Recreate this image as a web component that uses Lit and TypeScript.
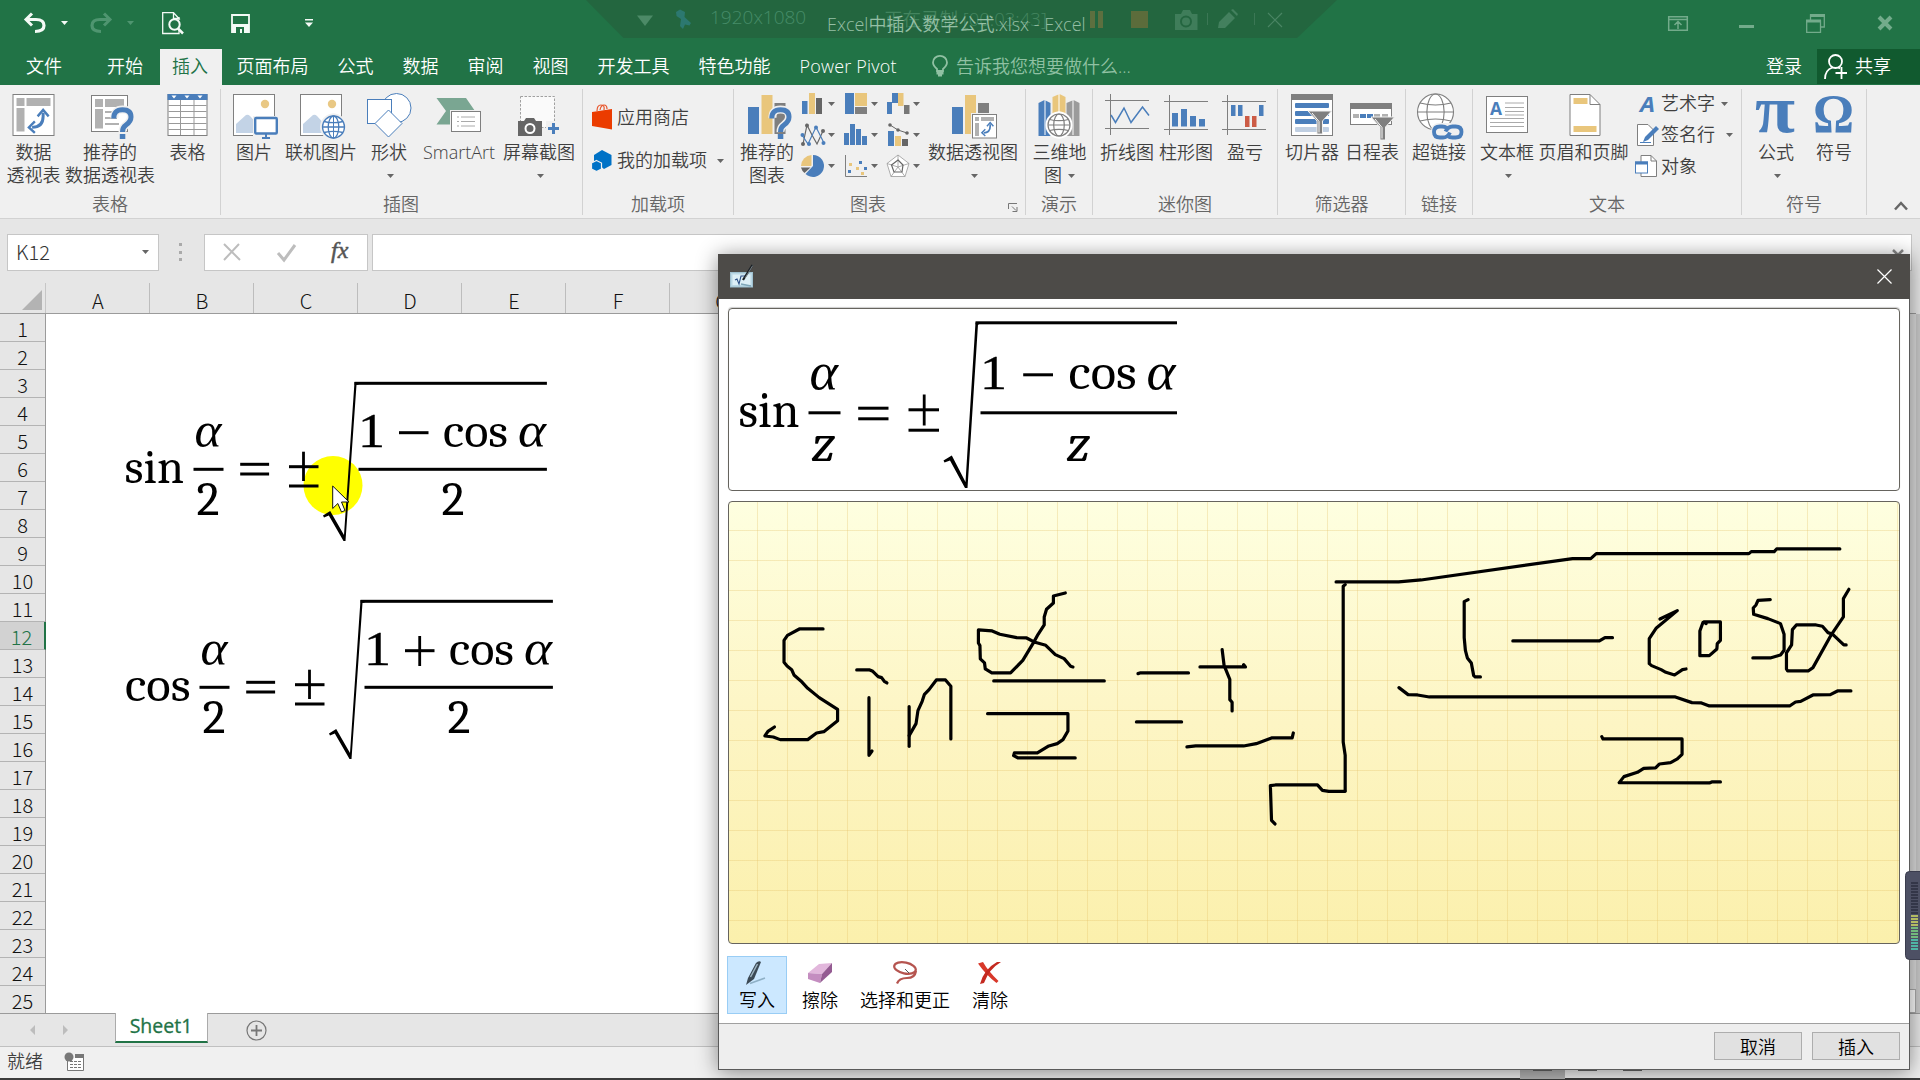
import { LitElement, html, svg, css } from "lit";
import { customElement } from "lit/decorators.js";

const B = "#4a7ebb", Y = "#e9c67c", G = "#7f7f7f", L = "#b1b1b1";
const ICON_TOP = 92;

// ---------- shared icon pieces (ribbon coordinates) ----------
const question = (x: number) => svg`
  <g transform="translate(${x} 0)">
    <path d="M3.5 118Q3 109.5 11.5 109.5Q20 109.5 20 117Q20 121.5 15 125Q11.300 127.600 11.500 132" fill="none" stroke="#f0f0f0" stroke-width="8"/>
    <path d="M2.800 118.500Q2.500 109.700 11.500 109.700Q20 109.700 20 117Q20 121.500 15 125Q11.300 127.600 11.500 132" fill="none" stroke=${B} stroke-width="5"/>
    <rect x="8.800" y="134" width="5.500" height="5" fill=${B}/>
  </g>`;
const globe = (x: number, y: number, r: number, c: string, w = 1.3) => svg`
  <g fill="none" stroke=${c} stroke-width=${w}>
    <circle cx=${x} cy=${y} r=${r} fill="#fff"/>
    <ellipse cx=${x} cy=${y} rx=${r * 0.48} ry=${r}/>
    <path d="M${x - r} ${y}H${x + r}M${x - r * 0.86} ${y - r * 0.5}Q${x} ${y - r * 0.28} ${x + r * 0.86} ${y - r * 0.5}M${x - r * 0.86} ${y + r * 0.5}Q${x} ${y + r * 0.28} ${x + r * 0.86} ${y + r * 0.5}"/>
  </g>`;
const photo = (x: number) => svg`
  <rect x=${x + 0.5} y="94.500" width="41" height="41" fill="#fff" stroke="#808080"/>
  <circle cx=${x + 32} cy="104" r="4.200" fill="#e9c884"/>
  <path d="M${x + 3} 133V124L${x + 13} 115Q${x + 15} 114 ${x + 17} 116L${x + 27} 127V133Z" fill="#c3d3e6"/>`;
const swap = (x: number, y: number, k: number) => svg`
  <g transform="translate(${x} ${y}) scale(${k})" fill="none" stroke=${B}>
    <path d="M17 4V8Q17 20 5 20" stroke-width="3.200"/>
    <path d="M11 8L17 1L23 8" stroke-width="2.600"/><path d="M8 13.500L1.500 20L8 26" stroke-width="2.600"/>
  </g>`;
const funnel = (x: number, y: number) => svg`
  <path d="M${x} ${y}h23.500l-9 10v13h-5.500v-13z" fill=${G} stroke="#f0f0f0" stroke-width="1"/>
  <path d="M${x + 4} ${y + 2}l7 8.500v11" fill="none" stroke="#fff" stroke-width="1"/>`;

const icons: Record<string, unknown> = {
  pivot: svg`<rect x="12.500" y="94.500" width="41" height="41" fill="#fff" stroke=${G}/>
    <path d="M16 98h8v8h-8zM26 98h24v8h-24zM16 108h8v23.500h-8z" fill=${L}/>${swap(27, 109, 0.92)}`,
  recPivot: svg`<rect x="91.500" y="95.500" width="36" height="36" fill="#fff" stroke=${G}/>
    <path d="M95 99h8v8h-8zM105 99h19v8h-19zM95 109h8v19.500h-8z" fill=${L}/>
    <path d="M105 112h8M105 118h12M105 124h14" stroke=${L} stroke-width="2"/>${question(111)}`,
  table: svg`<rect x="167.500" y="94.500" width="39" height="41" fill="#fff" stroke=${G}/>
    <path d="M180 100v35M193.500 100v35M168 105.500h38M168 111.500h38M168 117.500h38M168 123.500h38M168 129.500h38" stroke="#999"/>
    <rect x="167" y="94" width="40" height="6" fill=${B}/>
    <path d="M171 95.500h5l-2.500 3zM184 95.500h5l-2.500 3zM197 95.500h5l-2.500 3z" fill="#fff"/>`,
  picture: svg`${photo(233)}<rect x="253" y="116" width="26" height="20" fill="#f0f0f0"/><rect x="255.200" y="118" width="21.600" height="15.500" fill="#fff" stroke=${B} stroke-width="2.400" rx="1"/>
    <path d="M266 134v4M262 138h8" stroke=${B} stroke-width="2"/>`,
  online: svg`${photo(300)}${globe(333.5, 127, 12.5, "#f0f0f0", 2)}${globe(333.5, 127, 11, B)}<path d="M333.500 116v22" stroke=${B}/>`,
  shapes: svg`<g fill="#fff" stroke=${B}><circle cx="396.500" cy="108" r="14.500"/><rect x="367.500" y="99.500" width="24" height="24"/>
    <path d="M388.500 110L402 123.500L388.500 137L375 123.500Z"/></g>`,
  smart: svg`<path d="M436.500 98H466L475 111L466 124.500H436.500L446 111Z" fill="#7aa692"/>
    <rect x="450" y="110" width="33" height="24" fill="#f0f0f0"/><rect x="451.500" y="111.500" width="29" height="20" fill="#fff" stroke=${G}/>
    <path d="M457 117h2M461 117h14M457 121.500h2M461 121.500h14M457 126h2M461 126h14" stroke="#aaa"/>`,
  shot: svg`<rect x="520.500" y="96.500" width="34" height="31" fill="#fafafa" stroke="#a0a0a0" stroke-dasharray="2.500 1.500"/>
    <path d="M518 121h6l2-3h8l2 3h6v15h-24z" fill="#666"/><circle cx="530" cy="128.500" r="4.500" fill="none" stroke="#fff" stroke-width="2"/>
    <rect x="546" y="121" width="14" height="15" fill="#f0f0f0"/><path d="M548 128.500h11M553.500 123v11" stroke=${B} stroke-width="3"/>`,
  recChart: svg`<path d="M747.500 107h11v27h-11z" fill=${B}/><path d="M761 95h11v39h-11z" fill=${Y}/><path d="M774 103h11v31h-11z" fill=${G}/>${question(768.5)}`,
  pivotChart: svg`<path d="M952 107h11v27h-11z" fill=${B}/><path d="M965 95h11v39h-11z" fill=${Y}/><path d="M978 103h11v10h-11z" fill=${G}/>
    <rect x="971" y="113" width="27" height="27" fill="#f0f0f0"/><rect x="972.500" y="114.500" width="24" height="23.500" fill="#fff" stroke=${G}/>
    <path d="M975 117h4v4h-4zM981 117h13v4h-13zM975 123h4v13h-4z" fill=${L}/>${swap(981, 122, 0.54)}`,
  map3d: svg`<path d="M1038 103l6-3 6 3v33h-12z" fill=${B}/><path d="M1052 97l7-3 6 3v30h-13z" fill=${Y}/><path d="M1066 103l7-3 6 3v33h-13z" fill="#9b9b9b"/>
    <path d="M1044.500 100v35M1058.500 94v20M1072.500 100v35" stroke="#fff"/>${globe(1058.5, 125, 12.500, "#fff", 2)}${globe(1058.5, 125, 11, G, 1.2)}`,
  spark1: svg`<path d="M1110.500 94v41M1105 100.500h44M1105 128.500h44" stroke=${G} fill="none"/><path d="M1111 115l4.500 7.500 8.500-14.500 7 14.500 11.500-15.500 6.500 8.500" fill="none" stroke=${B} stroke-width="1.500"/>`,
  spark2: svg`<path d="M1169.500 95v40M1164 101.500h44M1164 129.500h44" stroke=${G}/><path d="M1172 113h6v13.500h-6zM1181 109h6v17.500h-6zM1190 116h6v10.500h-6zM1199 119h6v7.500h-6z" fill=${B}/>`,
  spark3: svg`<path d="M1227.500 95v40M1222 101.500h44M1222 129.500h44" stroke=${G}/><path d="M1231 105h4.500v11h-4.500zM1238 105h4.500v11h-4.500zM1259 105h4.500v11h-4.500z" fill=${B}/><path d="M1245 116h4.500v11h-4.500zM1252 116h4.500v11h-4.500z" fill="#cc5b45"/>`,
  slicer: svg`<rect x="1291.500" y="94.500" width="41" height="41" fill="#fff" stroke=${G}/><rect x="1291" y="94" width="42" height="6" fill=${G}/>
    <g fill=${B}><rect x="1295" y="103" width="34" height="5" rx="1"/><rect x="1295" y="111" width="34" height="5" rx="1"/><rect x="1295" y="119" width="34" height="5" rx="1"/></g><rect x="1295" y="127" width="34" height="5" rx="1" fill="#c0cfe2"/>${funnel(1308, 111)}`,
  timeline: svg`<rect x="1350.500" y="103.500" width="41" height="21" fill="#fff" stroke=${G}/><rect x="1350" y="103" width="42" height="6" fill=${G}/>
    <path d="M1353 114h6v4h-6zM1374 114h6v4h-6zM1382 114h6v4h-6z" fill=${L}/><path d="M1360 114h6v4h-6zM1367 114h6v4h-6z" fill=${B}/>${funnel(1371, 117)}`,
  link: svg`${globe(1435.5, 112, 18, G, 1.1)}<rect x="1431" y="123" width="33" height="17" rx="8" fill="#f0f0f0"/>
    <g fill="none" stroke=${B} stroke-width="3.800"><path d="M1447 128q-2-1.500-5-1.500h-2q-6 0-6 5.500t6 5.500h3q4.500 0 7-5"/><path d="M1447.500 136q2 1.500 5 1.500h3q6 0 6-5.500t-6-5.500h-3q-4.500 0-7 5"/></g>`,
  textbox: svg`<rect x="1486.500" y="96.500" width="41" height="36" fill="#fff" stroke=${G}/><path d="M1505 103h19M1505 107.500h19M1505 111.500h19M1490 118.500h34M1490 122.500h34M1490 126.500h34M1505 115h19" stroke="#aaa"/>
    <text x="1490" y="115" font-size="17" font-weight="700" font-family="Open Sans, Liberation Sans, sans-serif" fill=${B} textLength="12" lengthAdjust="spacingAndGlyphs">A</text>`,
  headfoot: svg`<path d="M1569.500 94.500h20l10 10v31h-30z" fill="#fff" stroke=${G}/><path d="M1589.500 94.500v10h10" fill="none" stroke=${G}/><path d="M1573 98h14v6h-14zM1573 126h23v6h-23z" fill=${Y}/>`,
  pi: svg`<text x="1755.500" y="132" font-size="68" font-weight="700" font-family="Liberation Serif, Times New Roman, serif" fill=${B} textLength="40" lengthAdjust="spacingAndGlyphs">π</text>`,
  omega: svg`<text x="1813.500" y="132" font-size="55" font-weight="700" font-family="Liberation Serif, Times New Roman, serif" fill=${B} textLength="41" lengthAdjust="spacingAndGlyphs">Ω</text>`,
};

// ---------- small chart gallery icons (24 x 24) ----------
const charts = [
  svg`<path d="M1 9h5.500v13H1z" fill=${B}/><path d="M8 1h6v21H8z" fill=${Y}/><path d="M15 6h6v16h-6z" fill="#666"/>`,
  svg`<path d="M1 1h9v21H1z" fill=${B}/><path d="M11 1h12v13H11z" fill=${Y}/><path d="M11 15h12v7H11z" fill=${G}/>`,
  svg`<path d="M1 10h5v12H1zM6 1h6v10H6z" fill=${B}/><path d="M12 1h5.500v13H12z" fill=${Y}/><path d="M18 13h5.500v9H18z" fill="#777"/>`,
  svg`<path d="M2 21L6 2L11 12L16 21L22 8" fill="none" stroke="#666" stroke-width="1.200"/><path d="M1 12L7 21L15 4L23 20" fill="none" stroke=${B} stroke-width="1.200"/><g fill="#666"><circle cx="6" cy="2.500" r="2"/><circle cx="22" cy="8" r="2"/><circle cx="2" cy="21" r="2"/></g><g fill=${B}><circle cx="1.500" cy="12" r="2"/><circle cx="8" cy="21" r="2"/><circle cx="15" cy="4.500" r="2"/><circle cx="22.500" cy="20" r="2"/></g>`,
  svg`<path d="M0 10h5v12H0zM6 1h5v21H6zM12 6h5v16h-5zM18 13h5v9h-5z" fill=${B}/>`,
  svg`<path d="M2 8h6v15H2z" fill=${B}/><path d="M9 13h6v10H9z" fill=${Y}/><path d="M16 16h6v7h-6z" fill="#666"/><path d="M4 2L12 7L21 10" fill="none" stroke="#666"/><g fill="#666"><circle cx="4" cy="2" r="1.800"/><circle cx="12" cy="7" r="1.800"/><circle cx="21" cy="10" r="1.800"/></g>`,
  svg`<path d="M12 12V1A11 11 0 1 1 4.500 20Z" fill=${B}/><path d="M10.500 11.500V1A11 11 0 0 0 0 12H10Z" fill=${Y}/><path d="M9.500 13.500H0A11 11 0 0 0 3.500 19Z" fill="#666"/>`,
  svg`<path d="M1.500 1V22.500H23" fill="none" stroke=${G}/><path d="M5 9h3v3H5zM12 13h3v3h-3zM17 18h3v3h-3z" fill=${Y}/><path d="M15 7h3v3h-3zM4 16h3v3H4zM20 13h3v3h-3z" fill=${B}/>`,
  svg`<g fill="none" stroke="#999" stroke-width=".8"><path d="M12 1L23 9.500L19 22.500H5L1 9.500Z" fill="#fff"/><path d="M12 1V13L23 9.500M12 13L19 22.500M12 13L5 22.500M12 13L1 9.500"/><path d="M12 6L17 11L16 18L8 18L5.500 11Z" stroke="#666" stroke-width="1.200"/></g>`,
];

// ---------- formula drawing ----------
const word = (t: string, x: number, w: number, y: number, it = false, size = 49) => svg`
  <text x=${x} y=${y} font-size=${size} font-style=${it ? "italic" : "normal"} textLength=${w} lengthAdjust="spacingAndGlyphs">${t}</text>`;
const one = (x: number, y: number) => svg`<text class="one" x=${x} y=${y} font-size="49" textLength="27" lengthAdjust="spacingAndGlyphs">1</text>`;
const rule = (x1: number, x2: number, y: number, h = 3) => svg`<rect x=${x1} y=${y - h / 2} width=${x2 - x1} height=${h}/>`;
const post = (x: number, y1: number, y2: number) => svg`<rect x=${x - 1.4} y=${y1} width="2.800" height=${y2 - y1}/>`;

const sheetBody = (plus: boolean) => svg`
  ${word("α", 194, 27, 446.7, true, 51)}${rule(193, 223, 469.3)}${word("2", 196, 23, 515)}
  ${rule(239.7, 268.6, 464.3)}${rule(239.7, 268.6, 474)}
  ${rule(288.5, 318, 466.7)}${post(303, 451.7, 481)}${rule(288.5, 318, 486)}
  <path d="M322.500 515.500L329.700 511L343.500 535L354 382H358V384.800H356L345 541H343L328.300 515.500L323.500 517.500Z"/>
  ${rule(354, 546.4, 383.3)}
  ${one(357.5, 446.7)}${rule(398.5, 428, 432.7)}${plus ? post(413.2, 418, 448) : ""}
  ${word("cos", 442.5, 65, 446.7)}${word("α", 517.5, 28, 446.7, true, 51)}
  ${rule(358, 546.4, 469.3)}${word("2", 441, 23, 515)}`;

const strokesA = [
  "268,386 206,386 175,405 166,420 166,486 174,497 186,508 192,524 210,542 228,564 258,592 306,627 306,661 270,694 251,698 228,718 156,718 138,710 116,707 124,693 141,680",
  "356,509 390,509 398,513 412,529 421,532 428,543 435,548", "388,592 388,765 396,752",
  "493,619 493,738", "493,706 511,670 516,631 527,603 533,582 545,568 564,539 588,539 602,558 602,716",
  "901,278 870,287 870,308 852,327 846,350 846,374 830,402 818,427 790,480 758,518 709,518 692,506 690,488 679,476 678,436 674,428 674,389 710,392 730,402 774,412 800,413 822,426 850,435 875,463 898,475 915,498 921,500",
  "714,542 1003,542", "698,640 908,640 908,692 895,718 880,730 858,737 828,758 768,758 766,766 778,773 927,773",
  "1091,520 1096,518 1223,518", "1087,665 1205,665", "1253,500 1372,500 1367,493",
  "1311,448 1316,495 1331,537 1331,598 1337,606 1337,632", "1219,740 1242,737 1367,737 1400,730 1440,713 1494,713 1497,698",
  "1449,971 1440,960 1437,856 1450,854 1560,854 1573,870 1590,873 1632,873",
];
const strokesB = [
  "113,872 113,765 108,725 108,258 113,253", "90,245 248,245 305,239 688,175 734,175 748,160 1134,160 1140,154 1198,154 1204,146 1364,146",
  "424,298 414,304 414,412 417,450 422,473 432,488 438,526 442,530 455,530", "537,422 756,422 770,412 789,412",
  "909,356 953,331 900,383 882,415 882,490 888,496 912,508 924,516 946,524 966,508 975,506",
  "1026,370 1020,365 1062,365 1062,420 1054,430 1053,446 1034,466 1010,466 1010,392 1018,366",
  "1188,298 1157,300 1152,314 1145,323 1146,342 1182,355 1214,370 1223,402 1223,450 1214,464 1188,473 1144,473",
  "1387,267 1373,295 1373,350 1343,402 1296,502 1284,512 1232,512 1229,506 1229,458 1242,434 1244,388 1254,374 1304,374 1320,378 1334,397 1346,402 1374,434 1380,434",
  "249,562 272,583 296,584 326,590 948,590 990,607 1014,608 1034,617 1237,617 1252,605 1265,603 1296,584 1340,583 1358,572 1392,572",
  "762,709 765,716 965,716 965,762 953,776 936,787 908,791 898,803 868,804 852,816 818,829 806,847 1034,848 1040,845 1062,845",
];

const COLS = ["A", "B", "C", "D", "E", "F", "G"];
const TABS = ["文件", "开始", "插入", "页面布局", "公式", "数据", "审阅", "视图", "开发工具", "特色功能", "Power Pivot"];

@customElement("app-root")
export class AppRoot extends LitElement {
  static styles = css`
    :host { display: block; width: 1920px; height: 1080px; overflow: hidden; position: relative;
      font: 350 18px/23px "Open Sans", "Noto Sans CJK SC", sans-serif; color: #3f3f3f; background: #e6e6e6; }
    * { box-sizing: border-box; }
    svg { display: block; flex: none; overflow: visible; }
    .app { display: flex; flex-direction: column; height: 1080px; }
    .cell { display: flex; align-items: center; justify-content: center; flex: none; }
    .title { height: 49px; background: #217346; display: flex; justify-content: space-between; }
    .qat, .sys { display: flex; height: 46px; }
    .doc { position: absolute; left: 827px; top: 13px; width: 268px; color: #95bfa5; white-space: nowrap; }
    .rec { position: absolute; left: 586px; top: 0; }
    .rectext { position: absolute; top: 7px; color: #468c68; white-space: nowrap; font-size: 19px; }
    .res { left: 710px; top: 6px; }
    .timer { left: 884px; font-size: 18.500px; color: #43855f; }
    .tabs { height: 36px; background: #217346; display: flex; color: #fff; align-items: stretch; }
    .tab { padding: 0 14.500px; line-height: 34px; white-space: nowrap; }
    .tab.file { padding-left: 26px; padding-right: 30.500px; }
    .tab.on { background: #f0f0f0; color: #217346; margin: 0 0 0 2px; padding: 0 14px 0 12.500px; }
    .tab.last { letter-spacing: .2px; width: 130px; }
    .tell { display: flex; align-items: center; color: #90c1a3; padding: 0 0 2px 17px; gap: 8px; flex: 1; line-height: 34px; }
    .login { line-height: 34px; padding-right: 15px; }
    .share { width: 103px; height: 35px; background: #115a2f; display: flex; align-items: center; gap: 8px; padding-left: 7px; line-height: 33px; }
    .ribbon { height: 134px; background: #f0f0f0; border-bottom: 1px solid #d2d2d2; display: flex; flex: none; padding-top: 4px; }
    .group { height: 126px; border-right: 1px solid #d2d2d2; display: flex; flex-direction: column; flex: none; position: relative; }
    .body { display: flex; height: 103px; padding-top: 3px; }
    .cap { color: #666; text-align: center; line-height: 23px; height: 22px; margin-top: 2px; flex: none; }
    .btn { display: flex; flex-direction: column; align-items: center; flex: none; white-space: nowrap; text-align: center; }
    .btn .lbl { margin-top: 3px; height: 23px; }
    .btn .lbl2 { height: 23px; display: flex; align-items: center; justify-content: center; gap: 6px; }
    .btn .lbl2 .drop { margin: 1px 0 0 3px; }
    .smalls { display: flex; flex-direction: column; }
    .srow { display: flex; align-items: center; gap: 5px; white-space: nowrap; }
    .tight .srow { gap: 2px; }
    .tight .srow .ar { margin-left: 4px; }
    .gal { display: grid; grid-template-columns: 42.500px 42.500px 42px; grid-template-rows: 31px 31px 31px; width: 127px; }
    .gal .srow { gap: 3px; align-items: flex-start; }
    .gal .srow .ar { margin-top: 10px; }
    .launch { position: absolute; right: 7px; bottom: 3px; }
    .collapse { flex: 1; display: flex; align-items: flex-end; padding: 0 0 7px 27px; }
    .fbar { height: 64px; display: flex; flex: none; padding: 15px 0 0 7px; align-items: flex-start; }
    .box { background: #fff; border: 1px solid #c6c6c6; height: 37px; display: flex; align-items: center; flex: none; }
    .name { width: 152px; padding: 0 9px 2px 8px; justify-content: space-between; font: 300 20px/34px "Noto Sans CJK SC", sans-serif; color: #333; }
    .fx { width: 164px; margin-left: 17px; }
    .input { width: 1540px; margin-left: 4px; justify-content: flex-end; padding-right: 7px; }
    .heads { height: 31px; display: flex; flex: none; border-bottom: 1px solid #9b9b9b; margin-right: 4px; font: 300 20px/35px "Noto Sans CJK SC", sans-serif; color: #111; }
    .corner { width: 46px; border-right: 1px solid #c6c6c6; display: flex; align-items: flex-end; justify-content: flex-end; padding: 0 3px 3px 0; flex: none; }
    .col { width: 104px; padding-left: 1px; text-align: center; border-right: 1px solid #bdbdbd; flex: none; height: 30px; }
    .grid { display: flex; height: 699px; flex: none; background: #fff; }
    .nums { width: 46px; background: #e6e6e6; border-right: 1px solid #9b9b9b; flex: none; font: 300 20px/29px "Noto Sans CJK SC", sans-serif; color: #111; text-align: center; }
    .num { height: 28px; border-bottom: 1px solid #b4b4b4; }
    .num.on { background: #d2d2d2; color: #217346; border-right: 2px solid #217346; margin-right: -1px; padding-right: 1px; }
    .canvas { flex: 1; position: relative; overflow: hidden; }
    .vbar { width: 20px; background: #dcdcdc; border-right: 4px solid #c8c8c8; border-left: 1px solid #bbb; display: flex; flex-direction: column; justify-content: flex-end; }
    .vbtn { height: 24px; background: #fdfdfd; border: 1px solid #aaa; }
    .maths { font-family: "Cambria Math", Cambria, Caladea, "Liberation Serif", serif; font-weight: 400; fill: #000; }
    .one { font-family: "Liberation Serif", serif; stroke: #000; stroke-width: .4px; }
    .sheets { height: 34px; flex: none; border-top: 1px solid #9b9b9b; border-bottom: 1px solid #c0c0c0; display: flex; align-items: flex-start; }
    .sheet { width: 93px; height: 30px; margin: -1px 0 0 115px; background: #fff; border: 1px solid #ababab; border-width: 0 1px; border-bottom: 2px solid #217346; color: #217346; text-align: center; font-size: 19.500px; line-height: 26px; font-weight: 400; -webkit-text-stroke: .3px #217346; padding-right: 1px; }
    .arrows { width: 115px; margin-right: -115px; height: 32px; }
    .plus { margin: 6px 0 0 38px; }
    .status { flex: 1; background: #f0f0f0; border-bottom: 2px solid #3c3c3c; display: flex; align-items: center; padding: 0 0 2px 7px; gap: 21px; }
    .views { margin-left: auto; margin-right: 265px; display: flex; height: 31px; margin-bottom: -4px; }
    .view { width: 45px; display: flex; align-items: center; justify-content: center; }
    .view.on { background: #b4b4b4; }
    .dialog { position: absolute; left: 718px; top: 254px; width: 1192px; height: 816px; background: #fff; border: 1px solid #5a5a5a; box-shadow: 0 2px 20px rgba(0,0,0,.45); display: flex; flex-direction: column; color: #000; }
    .dtitle { height: 45px; margin: -1px -1px 0; background: #4d4b48; display: flex; justify-content: space-between; padding: 0 18px 0 12px; align-items: center; flex: none; }
    .pane { margin: 9px 9px 0 9px; border: 1px solid #66645e; border-radius: 4px; flex: none; overflow: hidden; }
    .preview { height: 183px; box-shadow: 0 -1px 1px #ccc; }
    .ink { height: 443px; margin-top: 10px; background:
        repeating-linear-gradient(90deg, transparent 0 28px, rgba(226,190,100,.3) 28px 29.300px, transparent 29.300px 30px),
        repeating-linear-gradient(180deg, transparent 0 28px, rgba(226,190,100,.3) 28px 29.300px, transparent 29.300px 30px),
        linear-gradient(#feffe0, #fdf5c4 50%, #fbf0ac); }
    .tools { display: flex; height: 79px; padding: 12px 0 0 8px; flex: none; align-items: flex-start; }
    .tool { height: 58px; padding: 4px 11px 0; border: 1px solid transparent; display: flex; flex-direction: column; align-items: center; gap: 4px; white-space: nowrap; flex: none; }
    .tool.on { background: #cce8ff; border-color: #99cdf5; width: 60px; }
    .foot { flex: 1; background: #eee; border-top: 1px solid #a0a0a0; display: flex; justify-content: flex-end; gap: 10px; padding: 8px 9px 0 0; }
    .pb { width: 88px; height: 28px; background: #e1e1e1; border: 1px solid #adadad; text-align: center; line-height: 28px; }
    .meter { position: absolute; left: 1905px; top: 871px; }
    .pointer { position: absolute; left: 332px; top: 485px; }
  `;

  arrow(c = "#666", cls = "ar") {
    return html`<svg class=${cls} width="7" height="4" viewBox="0 0 7 4"><path d="M0 0h7L3.500 4z" fill=${c}/></svg>`;
  }
  btn(icon: string, centre: number, width: number, l1: string, l2: unknown = "") {
    return html`<div class="btn" style="width:${width}px">
      <svg width="60" height="46" viewBox="${centre - 30} ${ICON_TOP} 60 46">${icons[icon]}</svg>
      <span class="lbl">${l1}</span><span class="lbl2">${l2}</span></div>`;
  }
  group(width: number, cap: string, capShift: number, pad: number, body: unknown, extra: unknown = "") {
    return html`<div class="group" style="width:${width}px">
      <div class="body" style="padding-left:${pad}px">${body}</div>
      <div class="cap" style="padding-right:${capShift}px">${cap}</div>${extra}</div>`;
  }
  cell(w: number, body: unknown) { return html`<div class="cell" style="width:${w}px">${body}</div>`; }

  titleBar() {
    const w = "#f4faf6", d = "#4f9570", s = "#73ab8b";
    return html`<div class="title">
      <div class="qat">
        ${this.cell(69, html`<svg width="22" height="20" viewBox="0 0 22 20"><path d="M8 1L2 7L8 13" transform="translate(0 -.5)" fill="none" stroke=${w} stroke-width="3"/><path d="M2 6.500H12Q20 6.500 20 12.500T11 18.500" fill="none" stroke=${w} stroke-width="3.200"/></svg>`)}
        <div class="cell" style="width:14px;margin-left:-12px">${this.arrow(w)}</div>
        ${this.cell(59, html`<svg width="22" height="20" viewBox="0 0 22 20"><path d="M14 .5L20 6.500L14 12.500" fill="none" stroke=${d} stroke-width="3"/><path d="M20 6.500H10Q2 6.500 2 12.500T11 18.500" fill="none" stroke=${d} stroke-width="3.200"/></svg>`)}
        <div class="cell" style="width:14px;margin-left:-7px">${this.arrow(d)}</div>
        <div class="cell" style="width:72px"><svg width="22" height="22" viewBox="0 0 22 22"><path d="M17 5V8M17 18V21.500H.7V.7H11.500L17 6.500H11.500V.7" fill="none" stroke=${w} stroke-width="1.300"/><circle cx="12.500" cy="12.500" r="5.200" fill="#217346" stroke=${w} stroke-width="2"/><path d="M16 16.500L21 21.500" stroke=${w} stroke-width="2.500"/></svg></div>
        <div class="cell" style="width:62px"><svg width="19" height="19" viewBox="0 0 19 19"><path d="M1 1H18V18H1Z" fill="none" stroke=${w} stroke-width="1.800"/><path d="M1 10H18V18.500H1Z" fill=${w}/><path d="M5 13h8v6h-2v-4h-2v4H5z" fill="#217346"/></svg></div>
        <div class="cell" style="width:76px"><svg width="8" height="8" viewBox="0 0 8 8"><path d="M0 0H8V1.500H0ZM0 3.500H8L4 8Z" fill=${w}/></svg></div>
      </div>
      <div class="sys">
        ${this.cell(70, html`<svg width="20" height="15" viewBox="0 0 20 15"><path d="M.7.7H19.300V14.300H.7ZM.7 3.500H19.300M10 13V6M6.500 9L10 5.500L13.500 9" fill="none" stroke=${s} stroke-width="1.500"/></svg>`)}
        ${this.cell(67, html`<svg width="15" height="3" viewBox="0 0 15 3"><path d="M0 1.500H15" transform="translate(0 3)" stroke=${s} stroke-width="3"/></svg>`)}
        ${this.cell(70, html`<svg width="19" height="19" viewBox="0 0 19 19"><path d="M.7 7H14.500V18.300H.7ZM4.500 6V1H18.300V13H15" fill="none" stroke=${s} stroke-width="1.300"/><path d="M0 7H15M4 1.500H19" stroke=${s} stroke-width="3"/></svg>`)}
        ${this.cell(70, html`<svg width="14" height="14" viewBox="0 0 14 14"><path d="M1 1L13 13M13 1L1 13" stroke=${s} stroke-width="4"/></svg>`)}
      </div>
    </div>
    <svg class="rec" width="751" height="38" viewBox="586 0 751 38">
      <path d="M586 0H1337L1297 38H623.500Z" fill="#23663f"/>
      <path d="M637 15.500H653L645 26Z" fill="#4c8a67"/>
      <path d="M676 12L680 9.500L685 12L684.500 17L691 23L689.500 25.500L685 24.500L683 29L680 26L681 19L676.500 16Z" fill="#2c7870"/>
      <path d="M1090 11h5v17h-5zM1098 11h5v17h-5z" fill="#5d6f3f"/><rect x="1131" y="11" width="17" height="17" fill="#5c6c3b"/>
      <path d="M1175 14h6l2-4h7l2 4h5.500v16h-22.500z" fill="#3f7d5a"/><circle cx="1186" cy="21.500" r="5" fill="none" stroke="#246640" stroke-width="2"/>
      <path d="M1218 28l1-6 10-10 6 6-10 10zM1231 10l2-1 5 5-1 2z" fill="#43805e"/>
      <path d="M1207.500 13v12M1254.500 13v12" stroke="#3b7755"/><path d="M1268 13L1282 27M1282 13L1268 27" stroke="#4a8564" stroke-width="1.200"/>
    </svg>
    <span class="rectext res">1920x1080</span><span class="rectext timer">正在录制 [00:03:43]</span>
    <span class="doc">Excel中插入数学公式.xlsx - Excel</span>`;
  }

  tabBar() {
    return html`<div class="tabs">
      ${TABS.map((t, i) => html`<div class="tab ${i === 0 ? "file" : i === 2 ? "on" : i === 10 ? "last" : ""}">${t}</div>`)}
      <div class="tell"><svg width="16" height="22" viewBox="0 0 16 22"><path d="M5 16V14Q1 10.500 1 7.500A7 6.700 0 0 1 15 7.500Q15 10.500 11 14V16Z" fill="none" stroke="#90c1a3" stroke-width="1.800"/><path d="M4.500 17h7v2.500h-1.500v2h-4v-2h-1.500z" fill="#90c1a3"/></svg><span>告诉我您想要做什么...</span></div>
      <div class="login">登录</div>
      <div class="share"><svg width="23" height="25" viewBox="0 0 23 25"><circle cx="11.500" cy="7.500" r="6.500" fill="none" stroke="#fff" stroke-width="1.800"/><path d="M1 25Q1 16 8.500 13.500M14.500 13.500L16 14.500M11.500 19H23M17.500 13V25" fill="none" stroke="#fff" stroke-width="1.800"/></svg><span>共享</span></div>
    </div>`;
  }

  ribbon() {
    const a = this.arrow(), dr = this.arrow("#666", "drop");
    return html`<div class="ribbon">
      ${this.group(221, "表格", 0, 5, html`${this.btn("pivot", 33.5, 57, "数据", "透视表")}${this.btn("recPivot", 110, 96, "推荐的", "数据透视表")}${this.btn("table", 187.5, 59, "表格")}`)}
      ${this.group(362, "插图", 1, 9, html`${this.btn("picture", 254, 48, "图片")}${this.btn("online", 321, 86, "联机图片")}${this.btn("shapes", 389, 50, "形状", dr)}${this.btn("smart", 459, 90, "SmartArt")}${this.btn("shot", 539, 70, "屏幕截图", dr)}`)}
      ${this.group(151, "加载项", 0, 9, html`<div class="smalls">
        <div class="srow" style="height:50px"><svg width="20" height="26" viewBox="0 0 20 26"><path d="M5 7Q5 1 9 1T12 6M8 6Q9 1 12 1T15 5" fill="none" stroke="#e8542a" stroke-width="1.200"/><path d="M0 8L20 5V25.500L0 22Z" fill="#eb3c00"/></svg><span>应用商店</span></div>
        <div class="srow" style="height:37px"><svg width="20" height="22" viewBox="0 0 20 22"><path d="M10 0L19.500 5V15L12 19L2 11V5Z" fill="#0072c6"/><path d="M4.500 10.500L9.500 13V19L4.500 21.500L-.5 19V13Z" fill="#0072c6" stroke="#f0f0f0" stroke-width="1.200"/></svg><span>我的加载项</span><span style="margin-left:5px">${a}</span></div></div>`)}
      ${this.group(292, "图表", 23, 4, html`${this.btn("recChart", 766.5, 58, "推荐的", "图表")}
        <div class="gal" style="margin-left:5px">${charts.map((c) => html`<div class="srow"><svg width="24" height="24" viewBox="0 0 24 24">${c}</svg>${a}</div>`)}</div>
        ${this.btn("pivotChart", 973, 90, "数据透视图", dr)}`,
        html`<svg class="launch" width="10" height="9" viewBox="0 0 10 9"><path d="M.5 6V.5H9M4 3.500L8 7.500M9 4V8.500H4.500" fill="none" stroke="#777"/></svg>`)}
      ${this.group(67, "演示", 0, 0, this.btn("map3d", 1059.5, 67, "三维地", html`图${a}`))}
      ${this.group(185, "迷你图", 0, 4, html`${this.btn("spark1", 1127, 60, "折线图")}${this.btn("spark2", 1186, 58, "柱形图")}${this.btn("spark3", 1245, 60, "盈亏")}`)}
      ${this.group(128, "筛选器", 0, 4, html`${this.btn("slicer", 1312, 60, "切片器")}${this.btn("timeline", 1372, 60, "日程表")}`)}
      ${this.group(67, "链接", 0, 0, this.btn("link", 1439, 66, "超链接"))}
      ${this.group(269, "文本", 0, 4, html`${this.btn("textbox", 1507, 60, "文本框", dr)}${this.btn("headfoot", 1583.5, 93, "页眉和页脚")}
        <div class="smalls tight" style="margin-left:5px">
          <div class="srow" style="height:23px"><svg width="24" height="20" viewBox="0 0 24 20"><text x="5" y="18" font-size="22" font-weight="700" font-style="italic" font-family="Open Sans, sans-serif" fill=${B} textLength="15" lengthAdjust="spacingAndGlyphs">A</text></svg><span>艺术字</span>${a}</div>
          <div class="srow" style="height:39px"><svg width="24" height="22" viewBox="0 0 24 22"><path d="M2.500 .5H13L18.500 6V21.500H2.500Z" fill="#fff" stroke=${G}/><path d="M5 18.500h11" stroke=${B}/><path d="M8 18l2-5L21 2l3 3L13 16z" fill=${B}/></svg><span>签名行</span><span style="margin-left:5px">${a}</span></div>
          <div class="srow" style="height:24px"><svg width="24" height="22" viewBox="0 0 24 22"><path d="M6 .5H16L21.500 6V21.500H6Z" fill="#fff" stroke=${G}/><path d="M16 .5V6H21.500" fill="none" stroke=${G}/><rect x=".5" y="7" width="12" height="11" fill="#fff" stroke=${B}/><path d="M0 8h13" stroke=${B} stroke-width="3"/></svg><span>对象</span></div>
        </div>`)}
      ${this.group(125, "符号", 0, 5, html`${this.btn("pi", 1776.5, 58, "公式", dr)}${this.btn("omega", 1834.5, 58, "符号")}`)}
      <div class="collapse"><svg width="14" height="10" viewBox="0 0 14 10"><path d="M1 8.500L7 2L13 8.500" fill="none" stroke="#666" stroke-width="2.500"/></svg></div>
    </div>`;
  }

  dialog() {
    return html`<div class="dialog">
      <div class="dtitle">
        <svg width="24" height="24" viewBox="0 1 24 24"><rect x=".5" y="8.500" width="22" height="14.500" fill="#b9d7e4" stroke="#9fc0cf"/><rect x="2.500" y="10.500" width="18" height="10.500" fill="#ddeff6"/><path d="M5 16l2-1 2 5L11 12h5" fill="none" stroke="#2c4f86" stroke-width="1.100"/><path d="M13 16L22.500 1" stroke="#191f24" stroke-width="2.200"/><path d="M15 14L22.800 1.500" stroke="#9ba5aa" stroke-width=".7"/><path d="M11 20l10 2" stroke="#7fa6b8" stroke-width="1.500"/></svg>
        <svg width="15" height="15" viewBox="0 0 16 16"><path d="M.5.500L15.500 15.500M15.500.500L.5 15.500" stroke="#fff" stroke-width="1.300"/></svg>
      </div>
      <div class="pane preview"><svg class="maths" width="1171" height="180" viewBox="728.500 308.500 1171 180">
        ${word("sin", 738, 61, 426.7, false, 50)}${word("α", 809, 28.5, 388.3, true, 53)}${rule(808, 840, 412.3)}${word("z", 811, 24, 460, true, 53)}
        ${rule(857.7, 888, 407.7)}${rule(857.7, 888, 418.3)}${rule(908, 938.5, 409.3)}${post(923.7, 394, 425)}${rule(908, 938.5, 429.7)}
        <path d="M943 460L951.300 455L965 481.500L975 322H978.500V324H977.500L967 487.500H964.500L949.500 460L944 462Z"/>
        ${rule(975, 1176.5, 322.3)}${one(979.5, 388.3)}${rule(1022.7, 1052.5, 374.3)}
        ${word("cos", 1068, 68, 388.3, false, 50)}${word("α", 1146, 29, 388.3, true, 53)}${rule(980, 1176.5, 412.3)}${word("z", 1066, 24, 460, true, 53)}
      </svg></div>
      <div class="pane ink"><svg width="1171" height="440" viewBox="728.500 501.700 1171 440">
        <g fill="none" stroke="#000" stroke-width="3.200" stroke-linecap="round" stroke-linejoin="round">
          <g transform="translate(720 500) scale(.38265 .33333)">${strokesA.map((p) => svg`<polyline vector-effect="non-scaling-stroke" points=${p}/>`)}</g>
          <g transform="translate(1300 500) scale(.39541 .33333)">${strokesB.map((p) => svg`<polyline vector-effect="non-scaling-stroke" points=${p}/>`)}</g>
        </g></svg></div>
      <div class="tools">
        <div class="tool on"><svg width="24" height="24" viewBox="0 0 24 24"><path d="M5 22.500L20 17" stroke="#8fb0c6" stroke-width="1.600"/><path d="M1 24L3 17L11 2Q14 -1 16 1L9 18Z" fill="#3c4a55"/><path d="M5.500 16L12.500 3" stroke="#9eb5c2" stroke-width="1.500"/></svg><span>写入</span></div>
        <div class="tool" style="margin-left:3px"><svg width="24" height="24" viewBox="0 0 24 24"><path d="M0 12L11 3L24 2L14 13Z" fill="#e2b7dc"/><path d="M0 12L14 13L12 22L0 18Z" fill="#c48dc0"/><path d="M14 13L24 2V11L12 22Z" fill="#945b92"/></svg><span>擦除</span></div>
        <div class="tool" style="margin-left:-2px"><svg width="24" height="24" viewBox="0 0 24 24"><ellipse cx="12" cy="7" rx="11" ry="5.500" transform="rotate(12 12 7)" fill="none" stroke="#b5544f" stroke-width="2.200"/><path d="M23 10Q22 17 14 17T4 22.500" fill="none" stroke="#b5544f" stroke-width="2.200"/><path d="M12 8l4 4" stroke="#555"/></svg><span>选择和更正</span></div>
        <div class="tool" style="margin-left:-2px"><svg width="24" height="24" viewBox="0 0 24 24"><path d="M0 2.500L5 1Q10 10 20.500 20L18.500 22Q8 14 0 2.500Z" fill="#d8382a"/><path d="M23 1Q11 8 6 22L2 23Q6 8 19 1Z" fill="#c42a20"/></svg><span>清除</span></div>
      </div>
      <div class="foot"><div class="pb">取消</div><div class="pb">插入</div></div>
    </div>`;
  }

  render() {
    const view = svg`<rect x=".5" y=".5" width="18" height="14" fill="#fff" stroke="#666"/><path d="M4 11v4M9.500 11v4M14 11v4" stroke="#666"/>`;
    return html`<div class="app">
      ${this.titleBar()}${this.tabBar()}${this.ribbon()}
      <div class="fbar">
        <div class="box name"><span>K12</span>${this.arrow()}</div>
        <svg width="28" height="37" viewBox="0 0 28 37"><path d="M20 9h3v3h-3zM20 17h3v3h-3zM20 24h3v3h-3z" fill="#aaa"/></svg>
        <div class="box fx"><svg width="162" height="35" viewBox="0 0 162 35">
          <path d="M19 9L35 25M34 9L19 25" stroke="#bdbdbd" stroke-width="2"/><path d="M73 18L79 25L90 10" fill="none" stroke="#bdbdbd" stroke-width="3"/>
          <text x="126" y="23" font-family="Liberation Serif, serif" font-style="italic" font-size="24" fill="#555" stroke="#555" stroke-width=".5">fx</text></svg></div>
        <div class="box input"><svg width="12" height="8" viewBox="0 0 12 8"><path d="M1 1L6 6L11 1" fill="none" stroke="#888" stroke-width="2.500"/></svg></div>
      </div>
      <div class="heads"><div class="corner"><svg width="20" height="20" viewBox="0 0 20 20"><path d="M20 0V20H0Z" fill="#b3b3b3"/></svg></div>${COLS.map((c) => html`<div class="col">${c}</div>`)}</div>
      <div class="grid">
        <div class="nums">${Array.from({ length: 25 }, (_, i) => html`<div class="num ${i === 11 ? "on" : ""}">${i + 1}</div>`)}</div>
        <div class="canvas"><svg class="maths" width="700" height="699" viewBox="45.500 314 700 699">
          <circle cx="332.500" cy="485.400" r="29.500" fill="#ffff00"/>
          ${word("sin", 124, 59.5, 482.7)}${sheetBody(false)}
          ${word("cos", 124.5, 65.5, 700.7)}<g transform="translate(6 218)">${sheetBody(true)}</g>
        </svg></div>
        <div class="vbar"><div class="vbtn"></div></div>
      </div>
      <div class="sheets">
        <svg class="arrows" width="115" height="32" viewBox="0 0 115 32"><path d="M35 11V21L30 16ZM63 11V21L68 16Z" fill="#bdbdbd"/></svg>
        <div class="sheet">Sheet1</div>
        <svg class="plus" width="21" height="21" viewBox="0 0 21 21"><circle cx="10.500" cy="10.500" r="9.500" fill="none" stroke="#777" stroke-width="1.200"/><path d="M5 10.500H16M10.500 5V16" stroke="#777" stroke-width="1.800"/></svg>
      </div>
      <div class="status"><span>就绪</span>
        <svg width="21" height="20" viewBox="0 0 21 20"><path d="M3.500 8V18.500H19.500V3" fill="#fff" stroke="#777"/><path d="M11 2h9v4h-9z" fill="#777"/><path d="M6 9.500h11M6 12.500h11M6 15.500h11" stroke="#777" stroke-dasharray="3 1"/><circle cx="5" cy="5" r="4.500" fill="#777"/></svg>
        <div class="views">${[0, 1, 2].map((i) => html`<div class="view ${i ? "" : "on"}"><svg width="19" height="15" viewBox="0 0 19 15">${view}</svg></div>`)}</div></div>
    </div>
    <svg class="pointer" width="20" height="28" viewBox="0 0 20 28"><path d="M.7 1V23.500L5.800 18.500L9.500 27L13 25.500L9.500 17H17Z" fill="#fff" stroke="#111" stroke-width="1"/></svg>
    ${this.dialog()}
    <svg class="meter" width="15" height="89" viewBox="0 0 15 89"><rect x=".5" y=".5" width="22" height="88" rx="4" fill="#4d5064" stroke="#3a3c4d"/>
      ${Array.from({ length: 23 }, (_, i) => svg`<rect x="6" y=${11 + i * 3} width="7" height="2" fill=${i < 11 ? "#333648" : i < 15 ? "#b3bb62" : i < 19 ? "#72b97c" : "#4fb5a5"}/>`)}</svg>`;
  }
}
